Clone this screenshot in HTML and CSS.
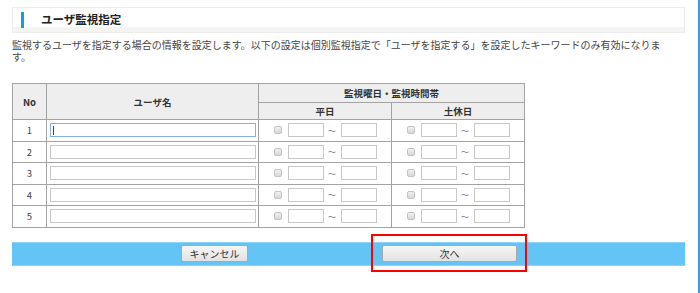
FILE: index.html
```html
<!DOCTYPE html>
<html lang="ja">
<head>
  <meta charset="UTF-8" />
  <title>ユーザ監視指定</title>
  <link rel="stylesheet" href="styles.css">
</head>
<body>
  <div class="page">
    <div class="title-box">
      <span class="title-mark"></span>
      <h1>ユーザ監視指定</h1>
    </div>

    <p class="desc">監視するユーザを指定する場合の情報を設定します。以下の設定は個別監視指定で「ユーザを指定する」を設定したキーワードのみ有効になります。</p>

    <table class="user-table">
      <tr>
        <th class="col-no" rowspan="2">No</th>
        <th class="col-name" rowspan="2">ユーザ名</th>
        <th colspan="2" class="head-top">監視曜日・監視時間帯</th>
      </tr>
      <tr>
        <th class="col-time head-sub">平日</th>
        <th class="col-time head-sub">土休日</th>
      </tr>
      <tr>
        <td class="no">1</td>
        <td class="name"><input type="text" class="name-input focused"></td>
        <td class="time"><span class="check"></span><input type="text" class="time-input"><span class="tilde">～</span><input type="text" class="time-input"></td>
        <td class="time"><span class="check"></span><input type="text" class="time-input"><span class="tilde">～</span><input type="text" class="time-input"></td>
      </tr>
      <tr>
        <td class="no">2</td>
        <td class="name"><input type="text" class="name-input"></td>
        <td class="time"><span class="check"></span><input type="text" class="time-input"><span class="tilde">～</span><input type="text" class="time-input"></td>
        <td class="time"><span class="check"></span><input type="text" class="time-input"><span class="tilde">～</span><input type="text" class="time-input"></td>
      </tr>
      <tr>
        <td class="no">3</td>
        <td class="name"><input type="text" class="name-input"></td>
        <td class="time"><span class="check"></span><input type="text" class="time-input"><span class="tilde">～</span><input type="text" class="time-input"></td>
        <td class="time"><span class="check"></span><input type="text" class="time-input"><span class="tilde">～</span><input type="text" class="time-input"></td>
      </tr>
      <tr>
        <td class="no">4</td>
        <td class="name"><input type="text" class="name-input"></td>
        <td class="time"><span class="check"></span><input type="text" class="time-input"><span class="tilde">～</span><input type="text" class="time-input"></td>
        <td class="time"><span class="check"></span><input type="text" class="time-input"><span class="tilde">～</span><input type="text" class="time-input"></td>
      </tr>
      <tr>
        <td class="no">5</td>
        <td class="name"><input type="text" class="name-input"></td>
        <td class="time"><span class="check"></span><input type="text" class="time-input"><span class="tilde">～</span><input type="text" class="time-input"></td>
        <td class="time"><span class="check"></span><input type="text" class="time-input"><span class="tilde">～</span><input type="text" class="time-input"></td>
      </tr>
    </table>

    <div class="button-bar">
      <button class="btn btn-cancel">キャンセル</button>
      <span class="highlight">
        <button class="btn btn-next">次へ</button>
      </span>
    </div>
  </div>
</body>
</html>
```

FILE: styles.css
```css
html, body {
  margin: 0;
  padding: 0;
  background: #fff;
  font-family: "Noto Sans CJK JP", "Noto Sans", sans-serif;
  color: #333;
}

.page {
  box-sizing: border-box;
  width: 700px;
  min-height: 293px;
  padding: 7px 13px 0 12px;
  border-right: 2px solid #3a9be0;
}

.title-box {
  display: flex;
  align-items: center;
  height: 24px;
  border: 1px solid #ececec;
  background: linear-gradient(#fff 78%, #f4f4f2 78%);
}

.title-mark {
  width: 3px;
  height: 16px;
  margin-left: 8px;
  margin-top: -1px;
  background: #1a9ae6;
}

h1 {
  margin: 0 0 0 17px;
  font-size: 11.5px;
  font-weight: bold;
  color: #222;
  line-height: 1;
}

.desc {
  margin: 6px 0 0 0;
  width: 662px;
  font-size: 10px;
  line-height: 12px;
  color: #444;
}

.user-table {
  margin-top: 20px;
  border-collapse: collapse;
  font-size: 9.5px;
}

.user-table th,
.user-table td {
  border: 1px solid #a3a3a3;
  padding: 0;
}

.user-table th {
  background: #eeeeee;
  font-weight: bold;
  color: #333;
}

.col-no { width: 33px; }
.col-name { width: 211px; }
.col-time { width: 132px; }

.head-top { height: 18px; }
.head-sub { height: 16px; }

.user-table td {
  height: 20.5px;
  background: #fff;
}

.no {
  text-align: center;
  color: #444;
}

.name {
  padding-left: 3px !important;
}

.name-input {
  display: block;
  box-sizing: border-box;
  width: 206px;
  height: 14px;
  margin: 0;
  border: 1px solid #c8c8c8;
  background: #fff;
  padding: 0;
}

.name-input.focused {
  border-color: #86aee0;
  background: linear-gradient(#444, #444) no-repeat 2px 2px / 1px 9px, #fff;
}

.time {
  text-align: center;
  white-space: nowrap;
  font-size: 0;
}

.check {
  display: inline-block;
  box-sizing: border-box;
  width: 8px;
  height: 8px;
  margin-right: 6px;
  border: 1px solid #c4c4c4;
  border-radius: 2px;
  background: linear-gradient(#f0f0f0, #d8d8d8);
  vertical-align: middle;
}

.time-input {
  box-sizing: border-box;
  width: 36px;
  height: 14px;
  margin: 0;
  padding: 0;
  border: 1px solid #c8c8c8;
  background: #fff;
  vertical-align: middle;
}

.tilde {
  display: inline-block;
  width: 17px;
  font-size: 8px;
  color: #777;
  vertical-align: middle;
  text-align: center;
}

.button-bar {
  display: flex;
  align-items: center;
  margin-top: 14px;
  height: 22px;
  background: #64c4f5;
  border-top: 1px solid #8ed4f8;
  border-bottom: 1px solid #8ed4f8;
}

.btn {
  box-sizing: border-box;
  height: 17px;
  padding: 0;
  border: 1px solid #a9a9a9;
  border-radius: 2px;
  background: linear-gradient(#f6f6f6, #e2e2e2);
  font-family: "Noto Sans CJK JP", sans-serif;
  font-size: 10px;
  color: #333;
  line-height: 15px;
}

.btn-cancel {
  width: 67px;
  margin-left: 169px;
}

.highlight {
  position: relative;
  display: block;
  margin-left: 134px;
}

.highlight::after {
  content: "";
  position: absolute;
  left: -11px;
  top: -11px;
  right: -10px;
  bottom: -10px;
  border: 2px solid #f00;
}

.btn-next {
  display: block;
  width: 135px;
}
```
